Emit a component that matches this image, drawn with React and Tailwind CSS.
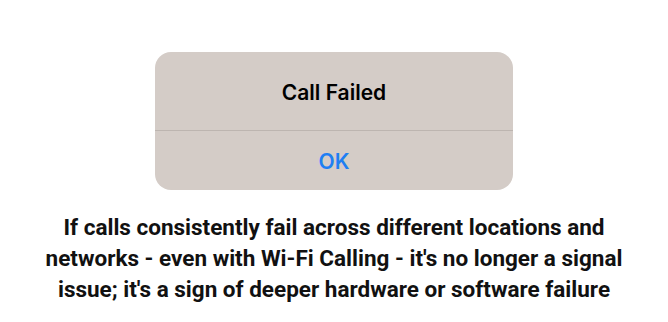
export default function App() {
  return (
    <div className="w-[668px] h-[322px] bg-white flex flex-col items-center pt-[52px]">
      {/* alert dialog */}
      <div className="w-[358px] h-[138px] bg-[#d4ccc7] rounded-[16px] flex flex-col font-['Inter',sans-serif]">
        <div className="h-[79px] flex items-center justify-center border-b border-[#bdb5b0]">
          <span className="text-[21px] font-semibold text-black pt-[3px]">Call Failed</span>
        </div>
        <div className="flex-1 flex items-center justify-center">
          <span className="text-[21px] font-semibold text-[#1f7ff3] pt-[3px]">OK</span>
        </div>
      </div>

      {/* caption */}
      <p className="mt-[22px] text-center text-[22.5px] leading-[31px] font-bold text-[#111] font-['Roboto',sans-serif]">
        If calls consistently fail across different locations and
        <br />
        networks - even with Wi-Fi Calling - it's no longer a signal
        <br />
        issue; it's a sign of deeper hardware or software failure
      </p>
    </div>
  );
}
